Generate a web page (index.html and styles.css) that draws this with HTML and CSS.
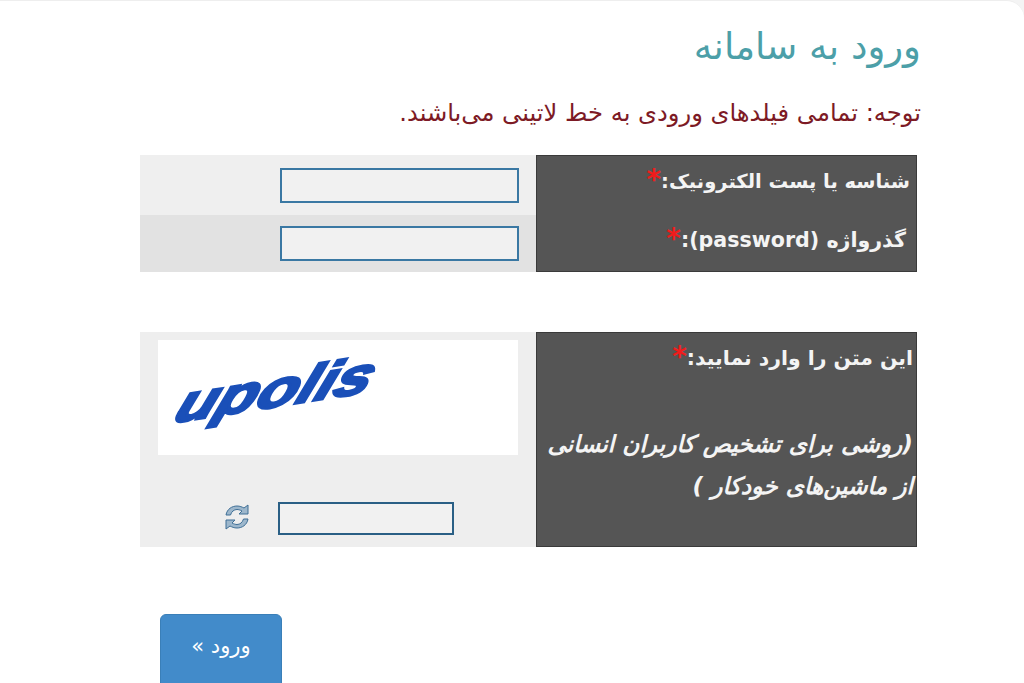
FILE: index.html
```html
<!DOCTYPE html>
<html lang="fa" dir="rtl">
<head>
<meta charset="utf-8">
<title>ورود به سامانه</title>
<link rel="stylesheet" href="styles.css">
</head>
<body>
<main class="page">
  <h1 class="title">ورود به سامانه</h1>
  <p class="notice">توجه: تمامی فیلدهای ورودی به خط لاتینی می‌باشند.</p>
  <section class="group group-login">
    <div class="labels">
      <div class="label label-user">شناسه یا پست الکترونیک:<span class="req">*</span></div>
      <div class="label label-pass">گذرواژه (password):<span class="req">*</span></div>
    </div>
    <div class="fields">
      <div class="field field-a"><input class="input" type="text"></div>
      <div class="field field-b"><input class="input" type="password"></div>
    </div>
  </section>
  <section class="group group-captcha">
    <div class="labels captcha-label">
      <div class="label-line">این متن را وارد نمایید:<span class="req">*</span></div>
      <div class="label-hint">(روشی برای تشخیص کاربران انسانی</div>
      <div class="label-hint">از ماشین‌های خودکار )</div>
    </div>
    <div class="fields captcha-fields">
      <div class="captcha-img">
        <svg class="captcha-svg" width="360" height="115" viewBox="0 0 360 115">
          <text class="captcha-text" transform="translate(14 83) rotate(-9) skewX(-30)" textLength="198" lengthAdjust="spacingAndGlyphs">upolis</text>
        </svg>
      </div>
      <div class="captcha-row">
        <input class="input input-captcha" type="text">
        <svg class="refresh" width="28" height="30" viewBox="0 0 28 30">
          <path d="M3 13 C4 7 9 4 14 4 C17 4 19 5 21 6 L25 3 V12 H16 L19 9 C17 8 15.500 7.500 14 7.500 C11 7.500 8.500 9.500 7.500 13 Z" />
          <path d="M25 17 C24 23 19 26 14 26 C11 26 9 25 7 24 L3 27 V18 H12 L9 21 C11 22 12.500 22.500 14 22.500 C17 22.500 19.500 20.500 20.500 17 Z" />
        </svg>
      </div>
    </div>
  </section>
  <button class="submit" type="button">ورود »</button>
</main>
</body>
</html>
```
FILE: styles.css
```css
* { box-sizing: border-box; }
html, body { margin: 0; padding: 0; height: 683px; overflow: hidden; background: #f4f4f4; }
body { font-family: "DejaVu Sans", "Noto Sans", sans-serif; }
.page {
  height: 683px;
  background: #fff;
  border-radius: 0 18px 0 0;
  border-top: 1px solid #eee;
  padding: 26px 103px 0 0;
  overflow: hidden;
}
.title {
  margin: 0;
  font-size: 37px;
  line-height: 40px;
  font-weight: 400;
  color: #4c9fa8;
}
.notice {
  margin: 26px 0 0;
  font-size: 24.200px;
  line-height: 40px;
  white-space: nowrap;
  color: #7d1a25;
}
.group {
  display: flex;
  width: 777px;
  margin-right: 4px;
}
.group-login { height: 117px; margin-top: 22px; }
.group-captcha { height: 215px; margin-top: 60px; }
.labels {
  width: 381px;
  flex: none;
  background: #555;
  border: 1px solid #3a3a3a;
  color: #f4f4f4;
  font-size: 20px;
  font-weight: 700;
}
.label { padding-right: 6px; line-height: 30px; }
.label-user { padding-top: 11px; font-size: 19.500px; }
.label-pass { padding-top: 28px; padding-right: 10px; font-size: 20.600px; }
.req { color: #f01c1c; font-size: 28px; line-height: 20px; vertical-align: -1px; }
.fields { flex: 1; display: flex; flex-direction: column; }
.field { flex: 1; display: flex; align-items: center; padding-right: 17px; }
.field-a { background: #efefef; padding-top: 2px; }
.field-b { background: #e2e2e2; }
.input {
  display: block;
  width: 239px;
  height: 35px;
  border: 2px solid #3a78a3;
  background: #f1f1f1;
  border-radius: 0;
  padding: 0;
}
.captcha-label { padding: 7px 3px 0 0; }
.label-line { line-height: 36px; font-size: 20.400px; }
.label-hint { font-style: italic; font-size: 23.300px; line-height: 42px; white-space: nowrap; }
.label-line + .label-hint { margin-top: 47px; }
.captcha-fields { background: #eee; padding: 8px 18px 0 0; }
.captcha-img { width: 360px; height: 115px; background: #fff; flex: none; }
.captcha-svg { display: block; }
.captcha-text {
  direction: ltr;
  text-anchor: start;
  font-family: "Liberation Sans", sans-serif;
  font-weight: 700;
  font-style: italic;
  font-size: 50px;
  fill: #1a4fb8;
  stroke: #1a4fb8;
  stroke-width: 2.500px;
}
.captcha-row { display: flex; align-items: center; margin-top: 47px; padding-right: 64px; }
.input-captcha { width: 176px; height: 33px; border-color: #2a5f85; }
.refresh { fill: #9db7cc; stroke: #3f6f96; stroke-width: 1; margin-right: 27px; margin-top: -3px; }
.submit {
  display: block;
  width: 122px;
  height: 80px;
  margin: 67px 639px 0 0;
  background: #428bca;
  border: 1px solid #3a7fb8;
  border-radius: 6px;
  color: #fff;
  font: 400 21px "DejaVu Sans", sans-serif;
  padding: 0 0 16px;
}
```
